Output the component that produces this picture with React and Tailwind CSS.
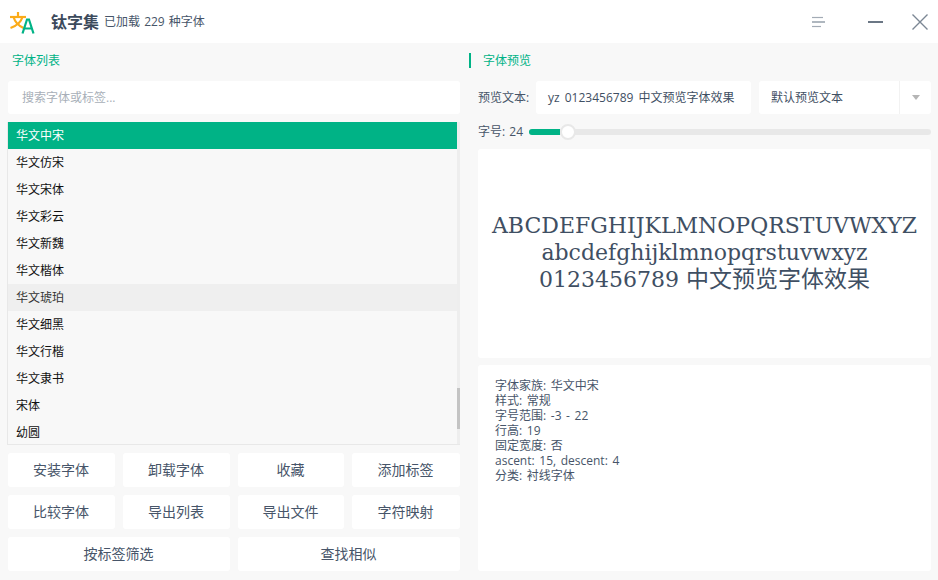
import React from "react";

const fontNames = ["华文中宋", "华文仿宋", "华文宋体", "华文彩云", "华文新魏", "华文楷体", "华文琥珀", "华文细黑", "华文行楷", "华文隶书", "宋体", "幼圆"];
const infoLines = ["字体家族: 华文中宋", "样式: 常规", "字号范围: -3 - 22", "行高: 19", "固定宽度: 否", "ascent: 15, descent: 4", "分类: 衬线字体"];

const ActionButton = ({ label, className = "" }) => (
  <button className={"h-[34px] pb-[2px] pr-[1px] bg-white rounded-[3px] text-[14px] text-[#475569] " + className}>{label}</button>
);

const App = () => {
  return (
    <div className="w-[938px] h-[580px] overflow-hidden bg-[#f8f8f8] text-[#3f4f63] font-['Open_Sans','Noto_Sans_CJK_SC',sans-serif] flex flex-col">
      <div className="h-[43px] bg-white flex items-center pl-[10px]">
        <svg width="25" height="24" viewBox="0 0 25 24" fill="none">
          <g stroke="#fbab18" strokeWidth="2.2">
            <path d="M0 7h16" />
            <path d="M8 2v5" />
            <path d="M3.5 7c1.5 5 4.5 8.500 10 11" />
            <path d="M12.500 7c-1.500 5-5 8.500-12 11" />
          </g>
          <path d="M12.500 23.500l4.500-14h2l4.500 14M14.500 18.500h7" stroke="#00b386" strokeWidth="2.2" />
        </svg>
        <span className="ml-[16px] text-[16px] font-bold text-[#3c4a5c]">钛字集</span>
        <span className="ml-[5px] text-[12px] text-[#475569] [word-spacing:1px]">已加载 229 种字体</span>
        <div className="ml-auto flex items-center">
          <svg width="14" height="12" viewBox="0 0 14 12" strokeWidth="1.2">
            <path d="M1 1.500h11" stroke="#a3abb5" />
            <path d="M1 6h13" stroke="#7b8794" />
            <path d="M1 10.500h9" stroke="#a3abb5" />
          </svg>
          <svg width="15" height="4" viewBox="0 0 15 4" stroke="#6b7785" strokeWidth="2" className="ml-[43px]">
            <path d="M0 2h15" />
          </svg>
          <svg width="16" height="16" viewBox="0 0 16 16" stroke="#7b8794" strokeWidth="1.4" className="ml-[29px] mr-[10px]">
            <path d="M0.500 0.500l15 15M15.500 0.500l-15 15" />
          </svg>
        </div>
      </div>

      <div className="flex-1 flex pt-[10px] pl-[8px] pr-[7px] gap-[18px]">
        <div className="w-[452px] shrink-0 flex flex-col">
          <div className="h-[15px] pl-[4px] text-[12px] leading-[15px] text-[#00b386]">字体列表</div>
          <div className="mt-[13px] h-[33px] bg-white rounded-[3px] pl-[14px] flex items-center text-[12px] text-[#a8afb8]">搜索字体或标签...</div>
          <div className="mt-[8px] h-[323px] flex border-l border-b border-[#e8e8e8] ml-[-1px]">
            <div className="flex-1">
              {fontNames.map((name, i) => (
                <div
                  key={name}
                  className={
                    "h-[27px] pl-[8px] pt-[1px] flex items-center text-[12px] " +
                    (i === 0 ? "bg-[#00b386] text-white" : i === 6 ? "bg-[#efefef] text-[#333333]" : "text-[#111111]")
                  }
                >
                  {name}
                </div>
              ))}
            </div>
            <div className="w-[3px] bg-[#eeeeee] flex flex-col">
              <div className="mt-[266px] h-[41px] bg-[#c4c4c4]" />
            </div>
          </div>
          <div className="mt-[8px] grid grid-cols-[107px_107px_106px_108px] gap-[8px]">
            <ActionButton label="安装字体" />
            <ActionButton label="卸载字体" />
            <ActionButton label="收藏" />
            <ActionButton label="添加标签" />
            <ActionButton label="比较字体" />
            <ActionButton label="导出列表" />
            <ActionButton label="导出文件" />
            <ActionButton label="字符映射" />
            <ActionButton label="按标签筛选" className="col-span-2" />
            <ActionButton label="查找相似" className="col-span-2" />
          </div>
        </div>

        <div className="flex-1 min-w-0 flex flex-col">
          <div className="h-[15px] border-l-2 border-[#00b386] pl-[12px] ml-[-9px] text-[12px] leading-[15px] text-[#00b386]">字体预览</div>
          <div className="mt-[13px] h-[33px] flex items-center text-[12px]">
            <span className="w-[58px] text-[#475569]">预览文本:</span>
            <div className="w-[215px] h-full bg-white rounded-[3px] pl-[12px] flex items-center whitespace-pre overflow-hidden text-[12px] [word-spacing:2px]">yz 0123456789 中文预览字体效果</div>
            <div className="ml-[8px] flex-1 h-full bg-white rounded-[3px] flex items-center">
              <span className="pl-[12px] flex-1">默认预览文本</span>
              <div className="w-[32px] h-full border-l border-[#f2f2f2] flex items-center justify-center">
                <div className="w-0 h-0 border-x-[4px] border-x-transparent border-t-[5px] border-t-[#b5b5b5]" />
              </div>
            </div>
          </div>
          <div className="mt-[8px] h-[20px] flex items-center text-[12px]">
            <span className="w-[51px] text-[#475569] [word-spacing:1px]">字号: 24</span>
            <div className="flex-1 h-[6px] rounded-full bg-[#e8e8e8] flex items-center">
              <div className="w-[31px] h-full rounded-l-full bg-[#00b386]" />
              <div className="w-[16px] h-[16px] shrink-0 rounded-full bg-white border-2 border-[#e8e8e8]" />
            </div>
          </div>
          <div className="mt-[7px] h-[209px] bg-white rounded-[3px] flex flex-col items-center justify-center text-[22px] leading-[26.5px] text-[#3f4f63] whitespace-nowrap font-['DejaVu_Serif','Noto_Sans_CJK_SC',serif]">
            <div>ABCDEFGHIJKLMNOPQRSTUVWXYZ</div>
            <div>abcdefghijklmnopqrstuvwxyz</div>
            <div>
              0123456789 <span className="text-[23px]">中文预览字体效果</span>
            </div>
          </div>
          <div className="mt-[7px] h-[206px] bg-white rounded-[3px] pt-[13px] pl-[17px] text-[12px] leading-[15px] text-[#475569] [word-spacing:1.5px]">
            {infoLines.map(line => (
              <div key={line}>{line}</div>
            ))}
          </div>
        </div>
      </div>
    </div>
  );
};

export default App;
